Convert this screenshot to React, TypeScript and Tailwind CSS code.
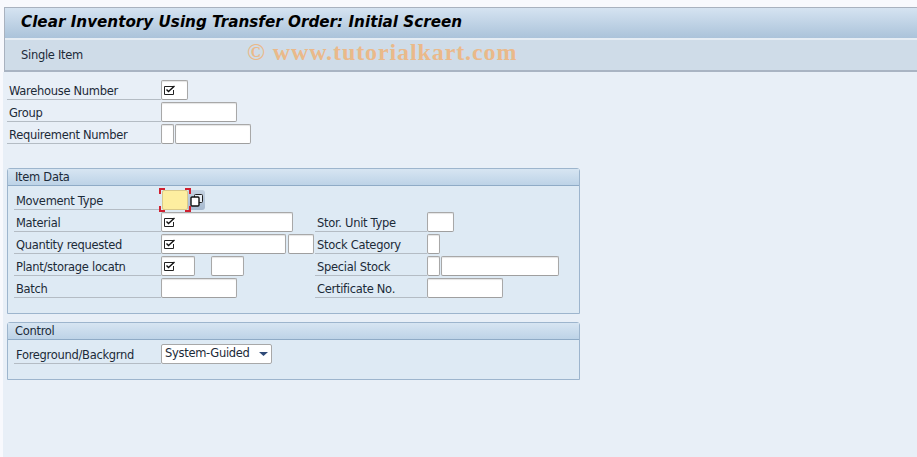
import React from "react";

const font = "font-['DejaVu_Sans',sans-serif]";

function Check() {
  return (
    <svg width="12" height="11" viewBox="0 0 12 11" className="absolute left-[2px] top-[4px]">
      <path d="M9.5 1.5H0.5V9.5H9.5V5" fill="none" stroke="#222" strokeWidth="1" />
      <path d="M2.5 4.5L4.5 6.5L10.5 1" fill="none" stroke="#111" strokeWidth="1.4" />
    </svg>
  );
}

function Field({ w, check, className = "" }: { w: string; check?: boolean; className?: string }) {
  return (
    <div className={`relative h-5 shrink-0 bg-white border border-[#a8a8a8] border-b-[#9f9f9f] rounded-[2px] shadow-[inset_0_1px_1px_#e4e4e4] ${w} ${className}`}>
      {check && <Check />}
    </div>
  );
}

function Label({ text, w, pl = "pl-[2px]" }: { text: string; w: string; pl?: string }) {
  return (
    <div className={`h-5 shrink-0 border-b border-[#b4bcc4] text-[11.5px] tracking-[-0.3px] leading-[22px] text-[#1c2a38] ${pl} ${w}`}>
      {text}
    </div>
  );
}

function Box({ title, h, children }: { title: string; h: string; children: React.ReactNode }) {
  return (
    <section className={`w-[573px] border border-[#9db5cd] rounded-t-[3px] bg-[#deeaf4] ${h}`}>
      <div className="h-[17px] border-b border-[#8fabc6] bg-gradient-to-b from-[#d7e5f2] to-[#bdd3e7] pl-[7px] text-[11.5px] tracking-[-0.3px] leading-[16px] text-[#1c2a38]">
        {title}
      </div>
      {children}
    </section>
  );
}

const corner = "absolute h-[6px] w-[6px] border-[#d02030]";

export default function App() {
  return (
    <div className={`relative h-[457px] w-[917px] overflow-hidden bg-[#f8f9fd] pt-[7px] pl-[3px] ${font}`}>
      <header className="ml-px border-t border-l border-[#a9b2bf]">
        <div className="h-[30px] bg-gradient-to-b from-[#d5e3f1] to-[#abc3da] pl-[16px] text-[15.2px] font-bold italic leading-[28px] text-black">
          Clear Inventory Using Transfer Order: Initial Screen
        </div>
        <div className="h-[34px] border-t-2 border-b-2 border-t-[#e6edf4] border-b-[#a9b4c3] bg-[#cfdce8] pl-4 text-[11.5px] tracking-[-0.3px] leading-[30px] text-[#1c2a38]">
          Single Item
        </div>
      </header>

      <div className="absolute left-[247px] top-[38px] font-['Liberation_Serif',serif] text-[24px] font-bold leading-[28px] tracking-[0.9px] text-[#eab98a]">
        © www.tutorialkart.com
      </div>

      <main className="h-[385px] bg-[#e8eff7] pt-2 pl-1">
        <div className="flex flex-col gap-[2px]">
          <div className="flex">
            <Label text="Warehouse Number" w="w-[154px]" />
            <Field w="w-[27px]" check />
          </div>
          <div className="flex">
            <Label text="Group" w="w-[154px]" />
            <Field w="w-[76px]" />
          </div>
          <div className="flex">
            <Label text="Requirement Number" w="w-[154px]" />
            <Field w="w-[13px]" />
            <Field w="w-[76px]" className="ml-px" />
          </div>
        </div>

        <div className="mt-[24px]">
          <Box title="Item Data" h="h-[146px]">
            <div className="grid grid-cols-[301px_1fr] gap-y-[2px] pt-[4px] pl-[6px]">
              <div className="col-span-2 flex">
                <Label text="Movement Type" w="w-[147px]" />
                <div className="relative ml-[1px] h-5 w-[26px] shrink-0 rounded-[2px] border border-[#d9c98a] bg-[#fdeea0]">
                  <span className={`${corner} -left-[4px] -top-[3px] border-t-2 border-l-2`} />
                  <span className={`${corner} -right-[4px] -top-[3px] border-t-2 border-r-2`} />
                  <span className={`${corner} -left-[4px] -bottom-[3px] border-b-2 border-l-2`} />
                  <span className={`${corner} -right-[4px] -bottom-[3px] border-b-2 border-r-2`} />
                </div>
                <div className="flex h-5 w-[17px] shrink-0 items-center justify-center rounded-r-[3px] bg-gradient-to-b from-[#c5d3e2] to-[#a6b9cf]">
                  <svg width="13" height="13" viewBox="0 0 13 13">
                    <rect x="4.5" y="0.5" width="8" height="8" rx="1" fill="#e8eef5" stroke="#222" />
                    <rect x="1" y="3" width="8" height="9" rx="1" fill="#fff" stroke="#111" strokeWidth="1.4" />
                  </svg>
                </div>
              </div>

              <div className="flex">
                <Label text="Material" w="w-[147px]" />
                <Field w="w-[132px]" check />
              </div>
              <div className="flex">
                <Label text="Stor. Unit Type" w="w-[112px]" />
                <Field w="w-[27px]" />
              </div>

              <div className="flex">
                <Label text="Quantity requested" w="w-[147px]" />
                <Field w="w-[125px]" check />
                <Field w="w-[26px]" className="ml-[2px]" />
              </div>
              <div className="flex">
                <Label text="Stock Category" w="w-[112px]" />
                <Field w="w-[13px]" />
              </div>

              <div className="flex">
                <Label text="Plant/storage locatn" w="w-[147px]" />
                <Field w="w-[34px]" check />
                <Field w="w-[33px]" className="ml-[16px]" />
              </div>
              <div className="flex">
                <Label text="Special Stock" w="w-[112px]" />
                <Field w="w-[13px]" />
                <Field w="w-[118px]" className="ml-px" />
              </div>

              <div className="flex">
                <Label text="Batch" w="w-[147px]" />
                <Field w="w-[76px]" />
              </div>
              <div className="flex">
                <Label text="Certificate No." w="w-[112px]" />
                <Field w="w-[76px]" />
              </div>
            </div>
          </Box>
        </div>

        <div className="mt-2">
          <Box title="Control" h="h-[58px]">
            <div className="flex pt-[4px] pl-[6px]">
              <Label text="Foreground/Backgrnd" w="w-[147px]" />
              <div className="flex h-5 w-[111px] shrink-0 items-center justify-between rounded-[2px] border border-[#a8a8a8] bg-white pl-[3px] pr-[3px] text-[11.5px] tracking-[-0.3px] text-[#1c2a38]">
                <span className="leading-[17px] -translate-y-px">System-Guided</span>
                <svg width="9" height="4" viewBox="0 0 9 4">
                  <path d="M0 0H9L4.5 4Z" fill="#2f4a78" />
                </svg>
              </div>
            </div>
          </Box>
        </div>
      </main>
    </div>
  );
}
